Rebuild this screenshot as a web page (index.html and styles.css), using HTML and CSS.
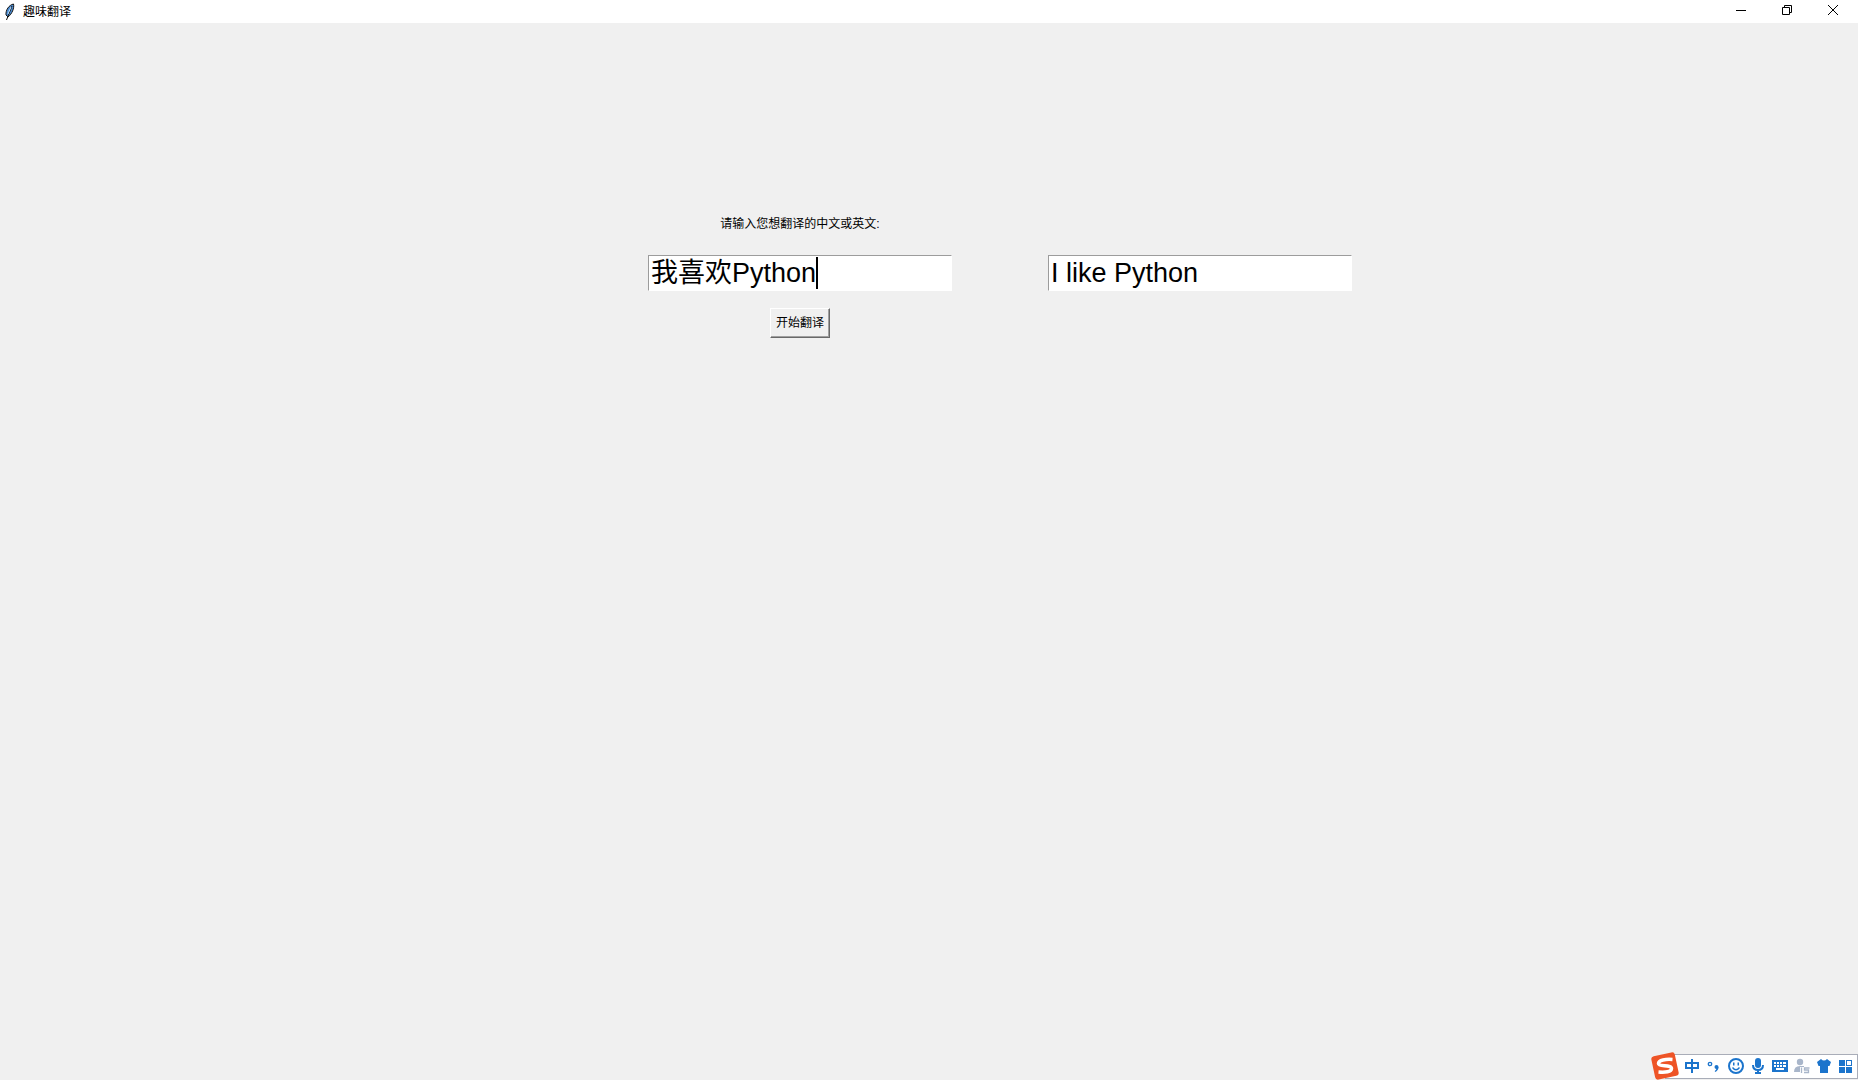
FILE: index.html
```html
<!DOCTYPE html>
<html lang="zh-CN">
<head>
<meta charset="utf-8">
<title>趣味翻译</title>
<link rel="stylesheet" href="styles.css">
</head>
<body>
<header class="titlebar">
  <svg class="feather" viewBox="0 0 12 18" aria-hidden="true"><path d="M2 12C1.500 7 5 2 9.500 1C10.500 5 8 11 4 14Z" fill="#4d8fd6" stroke="#111" stroke-width="1"/><path d="M8 3L2.500 17" stroke="#111" fill="none"/><path d="M7 4L4 11" stroke="#b8d8f2" fill="none"/></svg>
  <h1 class="title">趣味翻译</h1>
  <div class="window-controls">
    <button class="control" aria-label="最小化"><svg viewBox="0 0 12 12"><path d="M1 6.500H11"/></svg></button>
    <button class="control" aria-label="还原"><svg viewBox="0 0 12 12"><path d="M1.500 3.500H8.500V10.500H1.500ZM3.500 3V1.500H10.500V8.500H9"/></svg></button>
    <button class="control" aria-label="关闭"><svg viewBox="0 0 12 12"><path d="M1 1L11 11M11 1L1 11"/></svg></button>
  </div>
</header>
<main class="translator">
  <form class="source">
    <label class="prompt" for="source">请输入您想翻译的中文或英文:</label>
    <div class="field"><textarea class="entry" id="source" rows="1" spellcheck="false">我喜欢Python</textarea><span class="caret"></span></div>
    <button class="translate" type="button">开始翻译</button>
  </form>
  <div class="result"><textarea class="entry" rows="1" spellcheck="false" aria-label="翻译结果">I like Python</textarea></div>
</main>
<aside class="ime">
  <svg class="ime-logo" viewBox="0 0 28 28" aria-hidden="true"><rect x="2" y="2" width="24" height="24" rx="3" fill="#ee5426" transform="rotate(-12 14 14)"/><path d="M21.500 7.500C15 7 7.500 8 7.500 11.500C7.500 15 20.500 12.500 20.500 16.500C20.500 20 14 20.500 7.500 20" fill="none" stroke="#fff" stroke-width="3.500"/></svg>
  <div class="ime-bar">
    <button class="tool" aria-label="中文"><svg viewBox="0 0 16 16"><path class="line" d="M2 5H14V10H2ZM8 1V15"/></svg></button>
    <button class="tool" aria-label="标点"><svg viewBox="0 0 16 16"><circle cx="4" cy="6" r="1.700" fill="none" stroke="#1b74cc" stroke-width="1.300"/><circle cx="10.500" cy="9" r="2"/><path d="M12.500 9Q12.500 12.500 9 14L8.800 13Q10.500 12 10.500 10Z"/></svg></button>
    <button class="tool" aria-label="表情"><svg viewBox="0 0 16 16"><circle class="line" cx="8" cy="8" r="7"/><path d="M5 4.500H6.500V7.500H5ZM9.500 4.500H11V7.500H9.500Z"/><path d="M4.500 9.500Q8 14 11.500 9.500" fill="none" stroke="#1b74cc" stroke-width="1.300"/></svg></button>
    <button class="tool" aria-label="语音"><svg viewBox="0 0 16 16"><rect x="5" y="0" width="6" height="10" rx="3"/><path class="line" d="M3 7Q3 12 8 12Q13 12 13 7M8 12V15M5 15H11"/></svg></button>
    <button class="tool" aria-label="软键盘"><svg viewBox="0 0 16 16"><path fill-rule="evenodd" d="M0 2H16V14H0ZM2 4V6H4V4ZM5 4V6H7V4ZM8 4V6H10V4ZM11 4V6H14V4ZM2 7V9H4V7ZM5 7V9H7V7ZM8 7V9H10V7ZM11 7V9H14V7ZM4 10V12H12V10Z"/></svg></button>
    <button class="tool muted" aria-label="账户"><svg viewBox="0 0 16 16"><circle cx="6" cy="4" r="3.200"/><path d="M0 14Q0 8 6 8H10V9H6V14Z"/><path d="M7.500 9.500V15M15.500 10H10.500V12H14.500V14.500H10" fill="none" stroke="#a9b6ca" stroke-width="1.300"/></svg></button>
    <button class="tool" aria-label="皮肤"><svg viewBox="0 0 16 16"><path d="M5 1Q8 4 11 1L15 4L13.500 8H12V15H4V8H2.500L1 4Z"/></svg></button>
    <button class="tool" aria-label="工具箱"><svg viewBox="0 0 16 16"><path fill-rule="evenodd" d="M1 2H7V8H1ZM1 9H7V15H1ZM8 9H14V15H8ZM8 2H14V8H8ZM9 3V7H13V3Z"/></svg></button>
  </div>
</aside>
</body>
</html>
```
FILE: styles.css
```css
* { box-sizing: border-box; }
body {
  margin: 0;
  min-height: 100vh;
  background: #f0f0f0;
  color: #000;
  font: 12px/16px "Liberation Sans", "Noto Sans CJK SC", sans-serif;
}
button { font: inherit; color: inherit; padding: 0; }
svg { display: block; }
.titlebar { display: flex; align-items: center; height: 23px; padding: 0 2px 0 4px; background: #fff; }
.feather { width: 12px; height: 18px; }
.title { margin: 0 0 0 7px; font-size: 12px; font-weight: 400; }
.window-controls { display: flex; align-self: flex-start; margin-left: auto; }
.control { display: grid; place-items: center; width: 46px; height: 20px; border: 0; background: none; }
.control svg { width: 12px; height: 12px; fill: none; stroke: #000; }
.translator { display: flex; gap: 96px; align-items: flex-start; padding: 193px 0 0 648px; }
.source { display: flex; flex-direction: column; align-items: center; width: 304px; }
.prompt { margin-bottom: 23px; }
.field { position: relative; width: 100%; }
.result { width: 304px; margin-top: 39px; }
.entry {
  display: block;
  width: 100%;
  height: 36px;
  padding: 1px 2px;
  border: 1px solid;
  border-color: #9c9c9c #fff #fff #9c9c9c;
  background: #fff;
  color: #000;
  font: 27px/32px "Liberation Sans", "Noto Sans CJK SC", sans-serif;
  outline: 0;
  overflow: hidden;
  resize: none;
  white-space: nowrap;
}
.caret { position: absolute; left: 168px; top: 2px; width: 2px; height: 32px; background: #000; }
.translate {
  width: 60px;
  height: 30px;
  margin-top: 17px;
  border: 1px solid;
  border-color: #fff #696969 #696969 #fff;
  box-shadow: inset -1px -1px #a0a0a0;
  background: #f0f0f0;
}
.ime { position: fixed; right: 0; bottom: 0; display: flex; align-items: center; }
.ime-logo { position: relative; width: 28px; height: 28px; margin-right: -14px; }
.ime-bar { display: flex; gap: 6px; align-items: center; height: 25px; padding: 0 3px 0 18px; border: 1px solid #a9adb8; background: #fff; }
.tool { width: 16px; height: 16px; border: 0; background: none; }
.tool svg { width: 16px; height: 16px; fill: #1b74cc; }
.tool .line { fill: none; stroke: #1b74cc; stroke-width: 2; }
.muted svg { fill: #a9b6ca; }
```
